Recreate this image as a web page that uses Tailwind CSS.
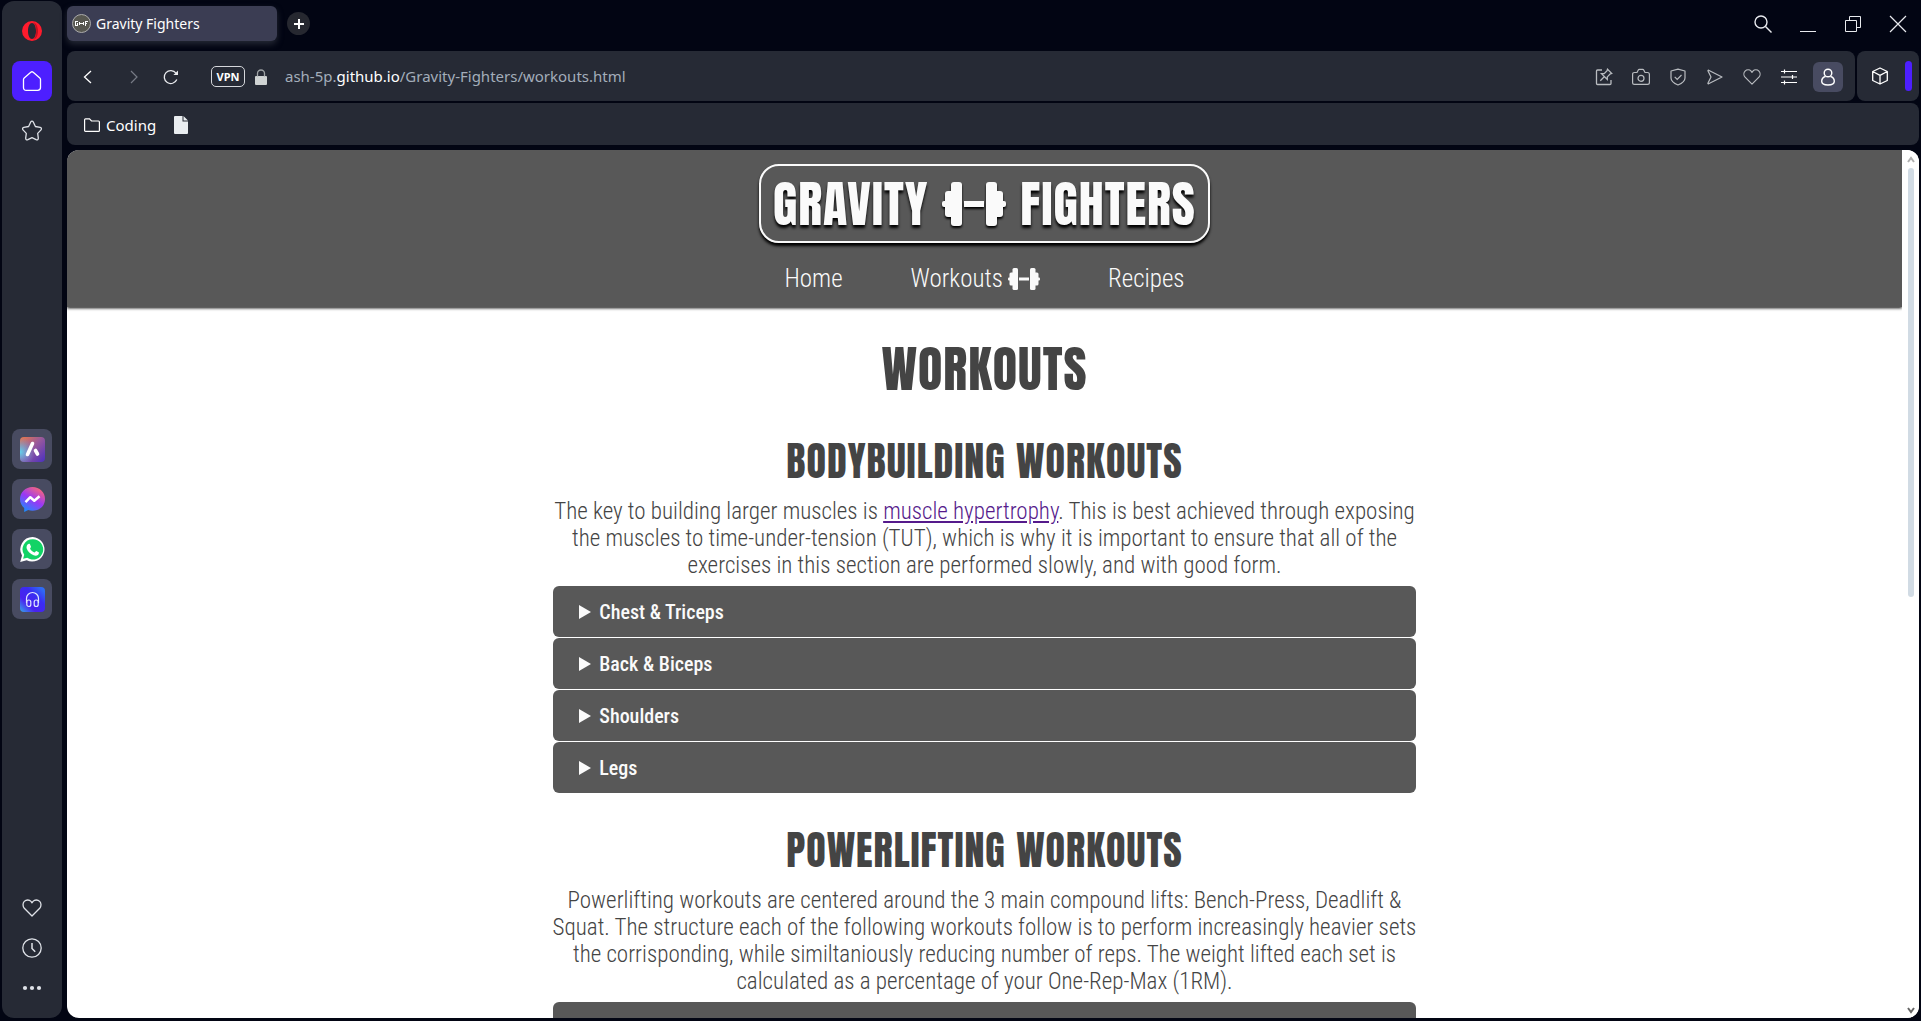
<!DOCTYPE html>
<html lang="en">
<head>
<meta charset="utf-8">
<title>Gravity Fighters</title>
<script src="https://cdn.jsdelivr.net/npm/@tailwindcss/browser@4"></script>
</head>
<body class="flex h-screen overflow-hidden border-l-2 border-[#020513] bg-[#020513] pb-[3px] font-['Noto_Sans',sans-serif] text-white">

<svg class="hidden" aria-hidden="true">
  <symbol id="dumbbell" viewBox="0 0 64 46">
    <g fill="currentColor">
      <rect x="9" y="1" width="11" height="44" rx="3"/>
      <rect x="3" y="10" width="12" height="26" rx="3"/>
      <rect x="0" y="20" width="6" height="6" rx="2"/>
      <rect x="22" y="20" width="20" height="6"/>
      <rect x="44" y="1" width="11" height="44" rx="3"/>
      <rect x="49" y="10" width="12" height="26" rx="3"/>
      <rect x="58" y="20" width="6" height="6" rx="2"/>
    </g>
  </symbol>
  <symbol id="heart" viewBox="0 0 20 20"><path d="M10 18 2.300 10.200C.6 8.300.6 5.200 2.300 3.400 4.200 1.500 7.300 1.500 9 3.400L10 4.800l1-1.400c1.700-1.900 4.800-1.900 6.700 0 1.700 1.800 1.700 4.900 0 6.800Z" fill="none" stroke="currentColor" stroke-width="1.300" stroke-linejoin="round"/></symbol>
</svg>

<!-- Sidebar -->
<nav aria-label="Sidebar" class="mt-px flex w-[60px] shrink-0 flex-col items-center justify-between rounded-xl bg-[#262a35] pt-5 pb-5 text-[#dfe2e8]">
  <div class="flex flex-col items-center pb-2">
    <button aria-label="Opera menu"><svg class="block size-5" viewBox="0 0 20 20"><path fill="#ff1b2d" fill-rule="evenodd" d="M10 0a10 10 0 1 0 0 20 10 10 0 0 0 0-20Zm0 2c2.300 0 4 3.500 4 8s-1.700 8-4 8-4-3.500-4-8 1.700-8 4-8Z"/><path fill="#c0101f" d="M11.500 1.200c3 1 4.500 4.800 4.500 8.800s-1.500 7.800-4.500 8.800c1.700-1.800 2.600-5 2.600-8.800s-.9-7-2.600-8.800Z"/></svg></button>
    <button aria-label="Home" class="mt-5 grid size-10 place-items-center rounded-lg bg-[#4d1fff] text-white"><svg class="size-5" viewBox="0 0 20 20" fill="none" stroke="currentColor" stroke-width="1.300" stroke-linejoin="round"><path d="M1.500 8.500Q1.500 7.600 2.200 7L8.800 1.200Q10 .3 11.200 1.200L17.800 7Q18.500 7.600 18.500 8.500V16.500Q18.500 19.300 15.700 19.300H4.300Q1.500 19.300 1.500 16.500Z"/></svg></button>
    <button aria-label="Speed dials" class="mt-[19px]"><svg class="block size-[22px]" viewBox="0 0 22 22" fill="none" stroke="currentColor" stroke-width="1.300" stroke-linejoin="round"><path d="M9.600 2.200q1.400-2 2.800 0l2 4.300 4.800.9q2 .7.800 2.500l-3.300 3.500.6 4.800q-.1 2.200-2.200 1.500L11 17.700l-4.100 2q-2.100.7-2.200-1.500l.6-4.800L2 9.900Q.8 8.100 2.800 7.400l4.800-.9Z"/></svg></button>
  </div>
  <div class="flex flex-col gap-2.5">
    <button aria-label="Aria" class="grid size-10 place-items-center rounded-lg bg-[#484b61]"><svg class="size-[25px]" viewBox="0 0 25 25"><defs><linearGradient id="ga" x1="0" y1="0" x2="1" y2="1"><stop offset="0" stop-color="#ee7a45"/><stop offset=".45" stop-color="#9a5a9a"/><stop offset="1" stop-color="#4a2fc0"/></linearGradient><radialGradient id="gb" cx="0" cy=".6" r=".6"><stop offset="0" stop-color="#5fd3ee"/><stop offset="1" stop-color="#5fa0ee" stop-opacity="0"/></radialGradient></defs><rect width="25" height="25" rx="4" fill="url(#ga)"/><rect width="25" height="25" rx="4" fill="url(#gb)"/><path d="M12.500 6.500 7.500 17.500M15.500 13.500l2 3.500" stroke="#fff" stroke-width="3.600" stroke-linecap="round"/></svg></button>
    <button aria-label="Messenger" class="grid size-10 place-items-center rounded-lg bg-[#484b61]"><svg class="size-[25px]" viewBox="0 0 25 25"><defs><linearGradient id="gm" x1=".2" y1="1" x2=".8" y2="0"><stop offset="0" stop-color="#1690ff"/><stop offset=".5" stop-color="#9a37f5"/><stop offset="1" stop-color="#ff6a72"/></linearGradient></defs><path fill="url(#gm)" d="M12.500 0C5.500 0 0 5 0 12c0 3.800 1.600 6.800 4.200 9v4l4-2c1.300.5 2.800.8 4.300.8C19.500 23.800 25 19 25 12S19.500 0 12.500 0Z"/><path d="m5.500 15.200 4.800-5 4 3.600 5.200-4.600" fill="none" stroke="#fff" stroke-width="2.500" stroke-linejoin="round"/></svg></button>
    <button aria-label="WhatsApp" class="grid size-10 place-items-center rounded-lg bg-[#484b61]"><svg class="size-[25px]" viewBox="0 0 25 25"><path fill="#fff" d="M12.700 0A12.300 12.300 0 0 0 2 18.500L.2 25l6.500-1.700A12.300 12.300 0 1 0 12.700 0Z"/><path fill="#12d366" d="M12.700 2.200a10.100 10.100 0 0 0-8.500 15.600l-1.100 4 4.100-1A10.200 10.200 0 1 0 12.700 2.200Z"/><path fill="#fff" d="M8.900 6.800c.5 0 .9 0 1.200.7l.9 2.200c.1.400-1.100 1.700-.9 2.100 1 1.800 2.400 3 4.300 3.800.5.100 1.500-1.700 2-1.500l2.300 1.200c.5.300.2 1.700-.5 2.400-1.200 1-2.700 1.200-4.600.6-3.500-1.300-5.700-3.700-6.900-6.700-.5-1.700 0-4.100 2.200-4.800Z"/></svg></button>
    <button aria-label="Player" class="grid size-10 place-items-center rounded-lg bg-[#484b61]"><svg class="size-[25px]" viewBox="0 0 25 25"><defs><linearGradient id="gp" x1="0" y1="1" x2=".9" y2=".1"><stop offset="0" stop-color="#35a9ec"/><stop offset=".35" stop-color="#4a22ee"/><stop offset=".7" stop-color="#3a2cf2"/><stop offset="1" stop-color="#2f6bf5"/></linearGradient></defs><rect width="25" height="25" rx="4" fill="url(#gp)"/><g fill="none" stroke="#dfe6ff" stroke-width="1.200"><path d="M6.500 16v-4.500a6 6 0 0 1 12 0V16"/><rect x="6.800" y="13" width="4" height="6.500" rx="2"/><rect x="14.200" y="13" width="4" height="6.500" rx="2"/></g></svg></button>
  </div>
  <div class="flex flex-col items-center gap-5">
    <button aria-label="Likes"><svg class="block size-5"><use href="#heart"/></svg></button>
    <button aria-label="History"><svg class="block size-5" viewBox="0 0 20 20" fill="none" stroke="currentColor" stroke-width="1.300"><circle cx="10" cy="10" r="9.200"/><path d="M10 5v5.500l3.200 3.300" stroke-width="1.500"/></svg></button>
    <button aria-label="More"><svg class="block size-5" viewBox="0 0 20 20" fill="currentColor"><circle cx="3" cy="10" r="2.100"/><circle cx="10" cy="10" r="2.100"/><circle cx="17" cy="10" r="2.100"/></svg></button>
  </div>
</nav>

<div class="flex min-w-0 flex-1 flex-col pl-[5px]">
  <!-- Tabs -->
  <div class="flex h-[51px] shrink-0 items-start pt-1.5 pr-3.5">
    <button class="flex h-[35px] w-[210px] items-center gap-[5px] rounded-md bg-[#3b3d53] px-[5px] text-[14px] shadow-[0_3px_6px_#262a36]">
      <svg class="size-[19px]" viewBox="0 0 19 19"><circle cx="9.500" cy="9.500" r="9" fill="#575750" stroke="#aaa"/><g fill="#fff"><path d="M3 7h3v1H4v3h1V9h1v3H3ZM7 9h5v1H7ZM7 8h1v3H7ZM11 8h1v3h-1ZM13 7h3v1h-2v1h1v1h-1v2h-1Z"/></g></svg>
      <span>Gravity Fighters</span>
    </button>
    <button aria-label="New tab" class="mt-1.5 ml-2.5 grid size-[23px] place-items-center rounded-full bg-[#262830]"><svg class="size-2.5" viewBox="0 0 10 10" stroke="#fff" stroke-width="2"><path d="M5 0v10M0 5h10"/></svg></button>
    <div class="mt-[9px] ml-auto flex gap-[27px] text-[#e8eaee]">
      <button aria-label="Search tabs"><svg class="block size-[18px]" viewBox="0 0 18 18" fill="none" stroke="currentColor" stroke-width="1.400"><circle cx="7" cy="7" r="6"/><path d="m11.500 11.500 6 6"/></svg></button>
      <button aria-label="Minimize"><svg class="block size-[18px]" viewBox="0 0 18 18" stroke="currentColor"><path d="M1 16.500h16"/></svg></button>
      <button aria-label="Restore"><svg class="block size-[18px]" viewBox="0 0 18 18" fill="none" stroke="currentColor"><path d="M1.500 5.500h11v11h-11ZM5.500 5V1.500h11v11H13"/></svg></button>
      <button aria-label="Close"><svg class="block size-[18px]" viewBox="0 0 18 18" stroke="currentColor" stroke-width="1.200"><path d="m1 1 16 16M17 1 1 17"/></svg></button>
    </div>
  </div>

  <!-- Address bar -->
  <div class="flex h-[50px] shrink-0 gap-0.5 pr-0.5">
    <div class="flex flex-1 items-center rounded-lg bg-[#262a35] pt-px pr-3 pl-4">
      <button aria-label="Back"><svg class="block size-[14px]" viewBox="0 0 14 14" fill="none" stroke="#fff" stroke-width="1.300"><path d="M8 1 1.500 7 8 13"/></svg></button>
      <button aria-label="Forward" class="ml-8"><svg class="block size-[14px]" viewBox="0 0 14 14" fill="none" stroke="#777b86" stroke-width="1.200"><path d="m2 1 6 6-6 6"/></svg></button>
      <button aria-label="Reload" class="ml-5"><svg class="block size-4" viewBox="0 0 16 16" fill="none" stroke="#e8eaee" stroke-width="1.300"><path d="M13.800 10.500A6.500 6.500 0 1 1 13 4.200"/><path d="M15 1.500v4.600h-4.600Z" fill="#e8eaee" stroke="none"/></svg></button>
      <button class="ml-8 h-[21px] w-[34px] rounded-[5px] border border-[#d5d7db] text-[11px] leading-[18px] font-bold">VPN</button>
      <svg class="ml-[10px] h-4 w-3" viewBox="0 0 12 16"><rect y="7" width="12" height="9" rx="1" fill="#cfd3d3"/><path d="M2.500 7.500V4.500a3.500 3.500 0 0 1 7 0v3" fill="none" stroke="#9fa3a5" stroke-width="1.300"/></svg>
      <a href="#" class="ml-[18px] text-[15px] text-[#a3adba]">ash-5p.<span class="text-white">github.io</span>/Gravity-Fighters/workouts.html</a>
      <div class="ml-auto flex items-center gap-[19px] text-[#b9bcc0]">
        <button aria-label="Edit"><svg class="block size-[18px]" viewBox="0 0 18 18" fill="none" stroke="currentColor" stroke-width="1.300"><path d="M7 2H2.500Q1.500 2 1.500 3v12.500q0 1 1 1H15q1 0 1-1V12"/><path d="m12.500 1.200 4.200 4.200-1.400.5-3 3v2.500L6.500 5.700h2.700l2.900-3ZM9 9l-3.700 3.700"/></svg></button>
        <button aria-label="Snapshot"><svg class="block size-[18px]" viewBox="0 0 18 18" fill="none" stroke="currentColor" stroke-width="1.200"><path d="M2.500 4.500H5L6.300 2q.3-.6 1-.6h3.400q.7 0 1 .6L13 4.500h2.500Q17.400 4.500 17.400 6.400v8q0 1.900-1.900 1.900h-13Q.6 16.300.6 14.400v-8Q.6 4.500 2.500 4.500Z"/><circle cx="9" cy="10.300" r="3"/></svg></button>
        <button aria-label="Ad blocker"><svg class="block size-[18px]" viewBox="0 0 18 18" fill="none" stroke="currentColor" stroke-width="1.200"><path d="M9 1.200 16 3v7q0 4-7 7-7-3-7-7V3Z" stroke-linejoin="round"/><path d="m5.700 8.800 2.500 2.500 4.300-4.300"/></svg></button>
        <button aria-label="My Flow"><svg class="block size-[18px]" viewBox="0 0 18 18" fill="none" stroke="currentColor" stroke-width="1.200" stroke-linejoin="round"><path d="M2.600 2.200 16 9 2.600 15.800Q1.600 16 2 15l3-6-3-6q-.2-1 .6-.8Z"/></svg></button>
        <button aria-label="Favourite"><svg class="block size-[18px]"><use href="#heart"/></svg></button>
        <button aria-label="Easy setup" class="text-white"><svg class="block size-[18px]" viewBox="0 0 18 18" fill="none" stroke="currentColor" stroke-width="1.200"><path d="M1 3.500h16M1 9h16M1 14.500h16M4.500 1.500v4M12.500 7v4M4.500 12.500v4"/></svg></button>
        <button aria-label="Profile" class="-ml-1 grid size-[30px] place-items-center rounded-md bg-[#484b61] text-white"><svg class="size-[18px]" viewBox="0 0 18 18" fill="none" stroke="currentColor" stroke-width="1.400"><circle cx="9" cy="5" r="3.800"/><path d="M6.500 8.500Q2.700 9.500 2.700 13.300q0 3.700 6.300 3.700t6.300-3.700q0-3.800-3.800-4.800"/></svg></button>
      </div>
    </div>
    <div class="flex w-[62px] items-center justify-between rounded-lg bg-[#262a35] pr-[7px] pl-[14px]">
      <button aria-label="Extensions"><svg class="block size-[18px]" viewBox="0 0 18 18" fill="none" stroke="#fff" stroke-width="1.300" stroke-linejoin="round"><path d="M9 1 16.300 4.500v9L9 17l-7.300-3.500v-9ZM1.700 4.500 9 8.300l7.300-3.800M9 8.300V17"/></svg></button>
      <div class="h-[30px] w-[7px] rounded-full bg-[#4d1fff]"></div>
    </div>
  </div>

  <!-- Bookmarks -->
  <div class="mt-0.5 mr-0.5 mb-[5px] flex h-[42px] shrink-0 items-center rounded-lg bg-[#262a35] px-[17px] pt-0.5 text-[15px]">
    <button class="flex items-center gap-1.5"><svg class="h-[14px] w-4" viewBox="0 0 16 14" fill="none" stroke="#fff" stroke-width="1.200"><path d="M1.500.8h4l2 2.200h7q.9 0 .9.900v8.500q0 .9-.9.900h-13Q.6 13.300.6 12.400V1.700Q.6.8 1.500.8Z"/></svg>Coding</button>
    <button aria-label="Bookmark" class="ml-[18px]"><svg class="block h-[18px] w-[14px]" viewBox="0 0 14 18" fill="#e9edf0"><path d="M1 0h7.500v5.500H14V17q0 1-1 1H1q-1 0-1-1V1Q0 0 1 0ZM9.500 0 14 4.500H9.500Z"/></svg></button>
  </div>

  <!-- Page -->
  <div class="mr-0.5 flex min-h-0 flex-1 overflow-hidden rounded-xl bg-white font-['Roboto_Condensed',sans-serif] text-[23px] leading-[27px] font-light text-[#444]">
    <div class="min-w-0 flex-1 overflow-hidden">
      <header class="flex h-[157px] flex-col items-center bg-[#585858] pt-3.5 text-[#fafafa] shadow-[0_1px_3px_#000]">
        <h1 class="flex h-[79px] items-center gap-3.5 rounded-[20px] border-2 border-[#fafafa] px-3 pt-px font-['Anton',sans-serif] text-[50px] leading-[74px] font-normal tracking-[1px] shadow-[0_3px_3px_#000] [text-shadow:0_3px_3px_#000]">GRAVITY<svg class="h-[46px] w-16 drop-shadow-[0_2px_1px_#000]"><use href="#dumbbell"/></svg>FIGHTERS</h1>
        <nav aria-label="Main" class="mt-[21px] flex gap-[68px] text-[25px] leading-[30px] font-light">
          <a href="#">Home</a>
          <a href="#" class="flex items-center gap-[5px]">Workouts<svg class="h-6 w-8"><use href="#dumbbell"/></svg></a>
          <a href="#">Recipes</a>
        </nav>
      </header>
      <main class="mx-auto w-[47%] text-center">
        <h2 class="pt-[26px] font-['Anton',sans-serif] text-[50px] leading-[72px] font-normal tracking-[1px]">WORKOUTS</h2>
        <section class="pt-[26px]">
          <h3 class="font-['Anton',sans-serif] text-[40px] leading-[60px] font-normal tracking-[1px]">BODYBUILDING WORKOUTS</h3>
          <p class="-mx-1 mt-[7px]">The key to building larger muscles is <a href="#" class="text-[#551a8b] underline">muscle hypertrophy</a>. This is best achieved through exposing the muscles to time-under-tension (TUT), which is why it is important to ensure that all of the exercises in this section are performed slowly, and with good form.</p>
          <div class="mt-[7px] flex flex-col gap-px text-left text-[20px] leading-[26px] font-medium text-[#fafafa]">
            <details class="rounded-md bg-[#585858]"><summary class="flex cursor-pointer list-none items-center gap-2 px-[26px] pt-[13px] pb-3"><svg class="h-3.5 w-3" viewBox="0 0 12 14"><path d="M0 0v14l12-7Z" fill="currentColor"/></svg>Chest &amp; Triceps</summary></details>
            <details class="rounded-md bg-[#585858]"><summary class="flex cursor-pointer list-none items-center gap-2 px-[26px] pt-[13px] pb-3"><svg class="h-3.5 w-3" viewBox="0 0 12 14"><path d="M0 0v14l12-7Z" fill="currentColor"/></svg>Back &amp; Biceps</summary></details>
            <details class="rounded-md bg-[#585858]"><summary class="flex cursor-pointer list-none items-center gap-2 px-[26px] pt-[13px] pb-3"><svg class="h-3.5 w-3" viewBox="0 0 12 14"><path d="M0 0v14l12-7Z" fill="currentColor"/></svg>Shoulders</summary></details>
            <details class="rounded-md bg-[#585858]"><summary class="flex cursor-pointer list-none items-center gap-2 px-[26px] pt-[13px] pb-3"><svg class="h-3.5 w-3" viewBox="0 0 12 14"><path d="M0 0v14l12-7Z" fill="currentColor"/></svg>Legs</summary></details>
          </div>
        </section>
        <section class="pt-[27px]">
          <h3 class="font-['Anton',sans-serif] text-[40px] leading-[60px] font-normal tracking-[1px]">POWERLIFTING WORKOUTS</h3>
          <p class="-mx-1 mt-[7px]">Powerlifting workouts are centered around the 3 main compound lifts: Bench-Press, Deadlift &amp; Squat. The structure each of the following workouts follow is to perform increasingly heavier sets the corrisponding, while similtaniously reducing number of reps. The weight lifted each set is calculated as a percentage of your One-Rep-Max (1RM).</p>
          <div class="mt-[7px] h-[51px] rounded-md bg-[#585858]"></div>
        </section>
      </main>
    </div>
    <!-- Scroll bar -->
    <div class="flex w-[17px] shrink-0 flex-col items-center bg-white pt-1.5 pb-1">
      <svg class="size-2" viewBox="0 0 8 8" fill="none" stroke="#b0b0b0" stroke-width="2"><path d="m1 6 3-4 3 4"/></svg>
      <div class="mt-1 h-1/2 w-1.5 rounded-full bg-[#d1dbe4]"></div>
      <svg class="mt-auto size-2" viewBox="0 0 8 8" fill="none" stroke="#666" stroke-width="2"><path d="m1 2 3 4 3-4"/></svg>
    </div>
  </div>
</div>
</body>
</html>
